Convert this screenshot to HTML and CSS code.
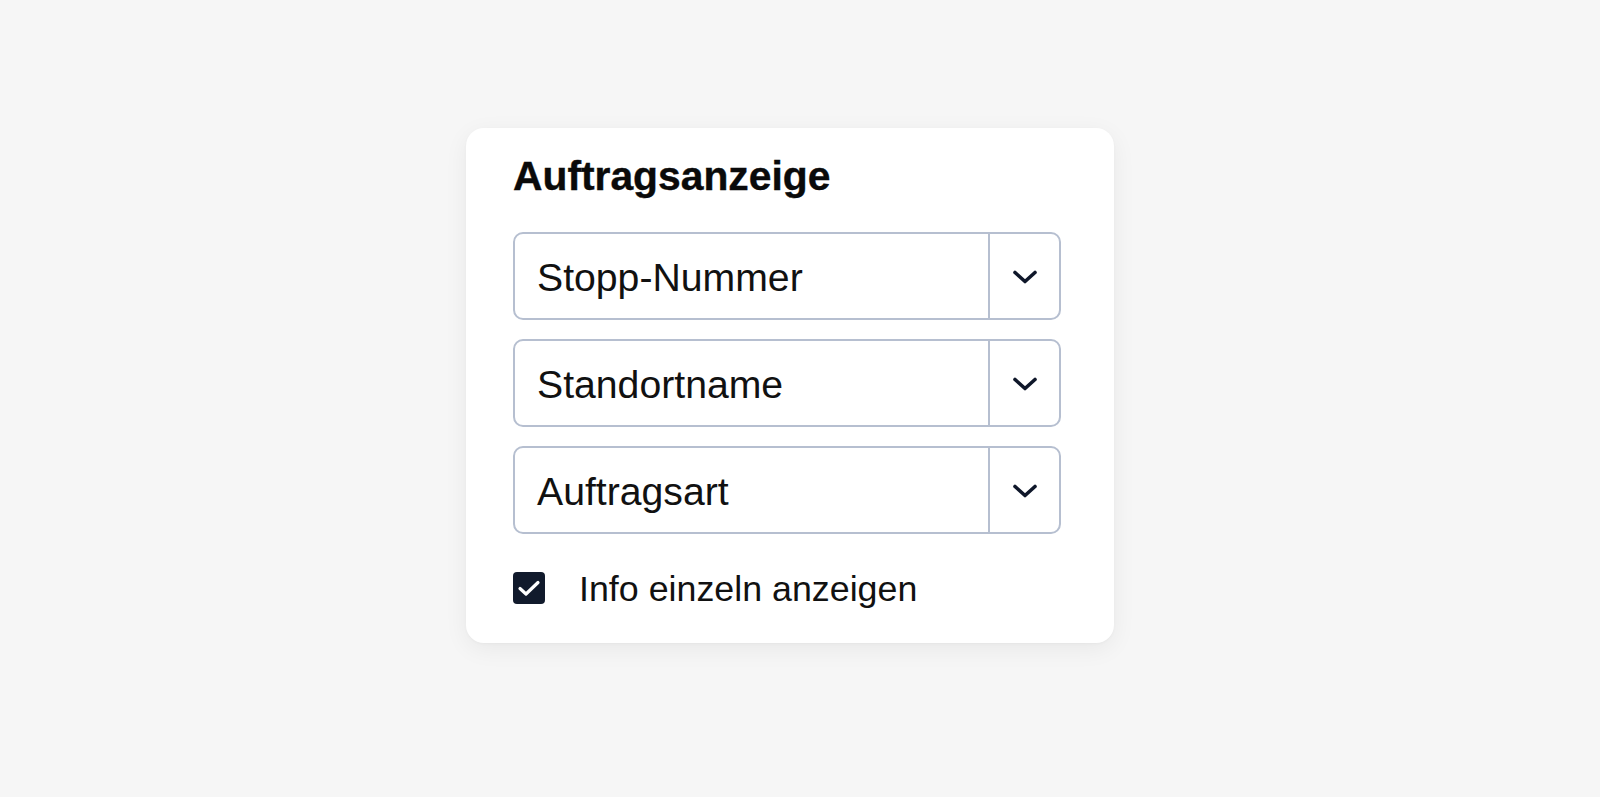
FILE: index.html
```html
<!DOCTYPE html>
<html lang="de">
<head>
<meta charset="utf-8">
<title>Auftragsanzeige</title>
<link rel="stylesheet" href="styles.css">
</head>
<body>
<div class="page">
  <section class="card">
    <h1 class="title">Auftragsanzeige</h1>
    <div class="fields">
      <div class="select">
        <span class="select-value">Stopp-Nummer</span>
        <span class="select-btn">
          <svg width="26" height="16" viewBox="0 0 26 16"><path d="M3 3.5 L13 12.5 L23 3.5" fill="none" stroke="#0f172a" stroke-width="3.6" stroke-linecap="round" stroke-linejoin="round"/></svg>
        </span>
      </div>
      <div class="select">
        <span class="select-value">Standortname</span>
        <span class="select-btn">
          <svg width="26" height="16" viewBox="0 0 26 16"><path d="M3 3.5 L13 12.5 L23 3.5" fill="none" stroke="#0f172a" stroke-width="3.6" stroke-linecap="round" stroke-linejoin="round"/></svg>
        </span>
      </div>
      <div class="select">
        <span class="select-value">Auftragsart</span>
        <span class="select-btn">
          <svg width="26" height="16" viewBox="0 0 26 16"><path d="M3 3.5 L13 12.5 L23 3.5" fill="none" stroke="#0f172a" stroke-width="3.6" stroke-linecap="round" stroke-linejoin="round"/></svg>
        </span>
      </div>
    </div>
    <label class="check">
      <span class="box">
        <svg width="24" height="18" viewBox="0 0 24 18"><path d="M3 9.5 L9 15 L21 3.5" fill="none" stroke="#ffffff" stroke-width="3.2" stroke-linecap="round" stroke-linejoin="round"/></svg>
      </span>
      <span class="check-label">Info einzeln anzeigen</span>
    </label>
  </section>
</div>
</body>
</html>
```

FILE: styles.css
```css
html, body {
  margin: 0;
  padding: 0;
  background: #f6f6f6;
}
body {
  font-family: "Liberation Sans", Arial, sans-serif;
  color: #111111;
}
.page {
  width: 1600px;
  height: 797px;
  padding: 128px 0 0 466px;
  box-sizing: border-box;
}
.card {
  width: 648px;
  height: 515px;
  box-sizing: border-box;
  background: #ffffff;
  border-radius: 18px;
  box-shadow: 0 6px 24px rgba(0, 0, 0, 0.06), 0 1px 3px rgba(0, 0, 0, 0.03);
  padding: 24px 53px 0 47px;
}
.title {
  margin: 0;
  font-size: 40.8px;
  line-height: 48px;
  font-weight: 700;
  color: #0a0a0a;
  -webkit-text-stroke: 0.4px #0a0a0a;
}
.fields {
  margin-top: 32px;
  display: flex;
  flex-direction: column;
  gap: 19px;
}
.select {
  height: 88px;
  box-sizing: border-box;
  border: 2px solid #b6bfd0;
  border-radius: 10px;
  display: flex;
  align-items: center;
}
.select-value {
  flex: 1;
  padding-left: 22px;
  padding-top: 3px;
  font-size: 39.2px;
  line-height: 42px;
  color: #111111;
}
.select-btn {
  width: 69px;
  align-self: stretch;
  border-left: 2px solid #b6bfd0;
  display: flex;
  align-items: center;
  justify-content: center;
  padding-top: 2px;
}
.check {
  margin-top: 33px;
  display: flex;
  align-items: center;
  gap: 34px;
}
.box {
  width: 32px;
  height: 32px;
  border-radius: 4px;
  background: #111a2c;
  display: flex;
  align-items: center;
  justify-content: center;
}
.check-label {
  font-size: 35.8px;
  line-height: 40px;
  color: #111111;
  padding-top: 2px;
}
```
